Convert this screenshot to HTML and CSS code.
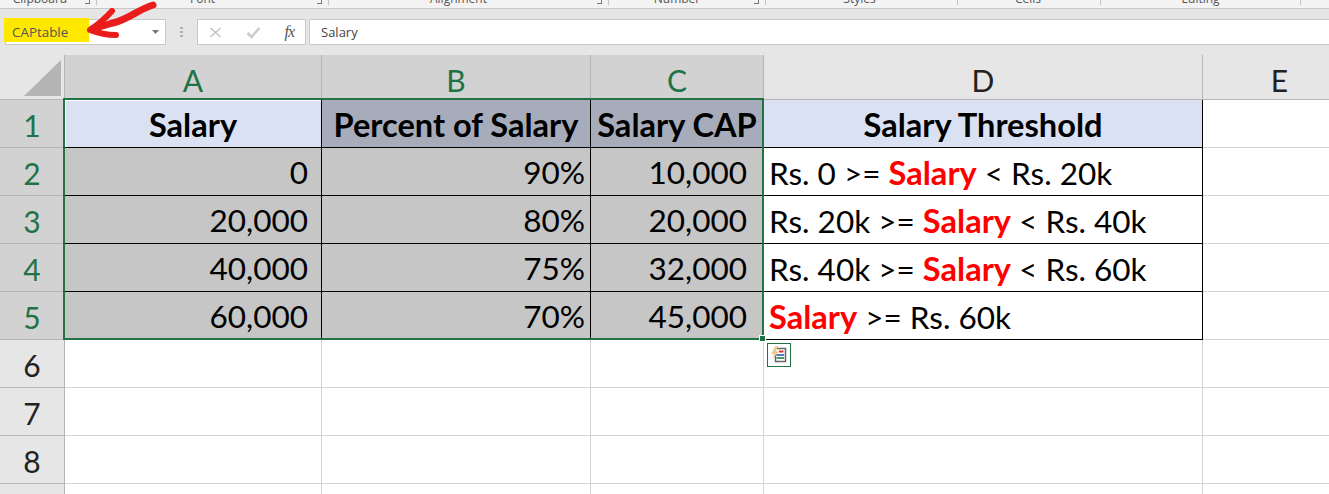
FILE: index.html
```html
<!DOCTYPE html>
<html lang="en">
<head>
<meta charset="utf-8">
<title>CAPtable</title>
<link rel="stylesheet" href="styles.css">
</head>
<body>
<div class="app">
  <div class="ribbon">
    <div class="group g1"><span>Clipboard</span><i class="launch"></i></div>
    <div class="group g2"><span>Font</span><i class="launch"></i></div>
    <div class="group g3"><span>Alignment</span><i class="launch"></i></div>
    <div class="group g4"><span>Number</span><i class="launch"></i></div>
    <div class="group g5"><span>Styles</span></div>
    <div class="group g6"><span>Cells</span></div>
    <div class="group g7"><span>Editing</span></div>
  </div>
  <div class="formula-row">
    <div class="namebox">
      <span class="name-mark">CAPtable</span>
      <svg class="caret" width="7" height="4" viewBox="0 0 7 4"><path d="M0 0h7L3.500 4z" fill="#777"/></svg>
    </div>
    <svg class="dots" width="3" height="11" viewBox="0 0 3 11"><path d="M0 0h3v2H0zM0 4h3v2H0zM0 8h3v2H0z" fill="#b0b0b0"/></svg>
    <div class="fx-box">
      <svg width="13" height="13" viewBox="0 0 13 13"><path d="M1.500 2l10 9M11.500 2l-10 9" stroke="#c4c4c4" stroke-width="1.500" fill="none"/></svg>
      <svg width="15" height="13" viewBox="0 0 15 13"><path d="M1.500 7l4 4 8-9" stroke="#cbcbcb" stroke-width="2.500" fill="none"/></svg>
      <span class="fx">fx</span>
    </div>
    <div class="formula">Salary</div>
  </div>
  <div class="sheet">
    <div class="corner"><svg width="37" height="37" viewBox="0 0 37 37"><path d="M0 36L37 0v36z" fill="#b4b4b4"/></svg></div>
    <div class="ch sel">A</div><div class="ch sel">B</div><div class="ch sel">C</div><div class="ch">D</div><div class="ch">E</div>

    <div class="rh sel">1</div>
    <div class="c b active hd">Salary</div><div class="c b dark hd">Percent of Salary</div><div class="c b dark hd">Salary CAP</div><div class="c b light hd">Salary Threshold</div><div class="c"></div>

    <div class="rh sel">2</div>
    <div class="c b grey num">0</div><div class="c b grey num pb">90%</div><div class="c b grey num pc">10,000</div><div class="c b txt">Rs. 0 &gt;= <b>Salary</b> &lt; Rs. 20k</div><div class="c"></div>

    <div class="rh sel">3</div>
    <div class="c b grey num">20,000</div><div class="c b grey num pb">80%</div><div class="c b grey num pc">20,000</div><div class="c b txt">Rs. 20k &gt;= <b>Salary</b> &lt; Rs. 40k</div><div class="c"></div>

    <div class="rh sel">4</div>
    <div class="c b grey num">40,000</div><div class="c b grey num pb">75%</div><div class="c b grey num pc">32,000</div><div class="c b txt">Rs. 40k &gt;= <b>Salary</b> &lt; Rs. 60k</div><div class="c"></div>

    <div class="rh sel">5</div>
    <div class="c b grey num">60,000</div><div class="c b grey num pb">70%</div><div class="c b grey num pc">45,000</div><div class="c b txt"><b>Salary</b> &gt;= Rs. 60k</div><div class="c"></div>

    <div class="rh">6</div>
    <div class="c"></div><div class="c"></div><div class="c"></div>
    <div class="c qa-cell"><div class="qa"><svg width="18" height="18" viewBox="0 0 18 18"><path d="M6.500 2.500h9v13h-10V8" fill="#fff" stroke="#666" stroke-width="1.500"/><path d="M5.500 0L1 8h3L2.500 13 9 5.500H6L8 0z" fill="#efc88a"/><path d="M9 4.500h4.500v2H9z" fill="#d33"/><path d="M6.500 8h7.500v2H6.500z" fill="#4a7fc1"/><path d="M6.500 11h7.500v2H6.500z" fill="#4f9a6a"/></svg></div></div>
    <div class="c"></div>

    <div class="rh">7</div>
    <div class="c"></div><div class="c"></div><div class="c"></div><div class="c"></div><div class="c"></div>
    <div class="rh">8</div>
    <div class="c"></div><div class="c"></div><div class="c"></div><div class="c"></div><div class="c"></div>
    <div class="rh"></div>
    <div class="c"></div><div class="c"></div><div class="c"></div><div class="c"></div><div class="c"></div>

    <div class="selection"><i class="handle"></i></div>
  </div>
  <svg class="arrow" width="90" height="44" viewBox="0 0 90 44">
    <path d="M66 5C52 9 42 19 26 23L5 29" fill="none" stroke="#ea1c1c" stroke-width="7" stroke-linecap="round"/>
    <path d="M25 11Q16 21 3 30Q16 35 29 35" fill="none" stroke="#ea1c1c" stroke-width="6" stroke-linecap="round" stroke-linejoin="round"/>
  </svg>
</div>
</body>
</html>
```
FILE: styles.css
```css
* { box-sizing: border-box; }
html, body { margin: 0; padding: 0; }
body { width: 1329px; height: 494px; overflow: hidden; background: #fff; font-family: "Lato", "Liberation Sans", sans-serif; }
.app { position: relative; width: 1329px; height: 494px; overflow: hidden; display: flex; flex-direction: column; }

.ribbon { height: 9px; flex: none; display: grid; grid-template-columns: 97px 232px 280px 157px 192px 143px 200px 28px; background: #f3f3f3; border-bottom: 1px solid #c8c8c8; overflow: hidden; font: 12px/14px "Open Sans", sans-serif; color: #555; }
.group { position: relative; height: 5px; border-right: 1px solid #c4c4c4; text-align: center; }
.group span { display: block; margin-top: -8px; }
.launch { position: absolute; right: 6px; top: 0; width: 5px; height: 4px; border-right: 1px solid #777; border-bottom: 1px solid #777; }
.g1 span { padding-right: 16px; }
.g2 span, .g3 span, .g4 span { padding-right: 20px; }
.g5 span { padding-right: 4px; }
.g6 span { padding-right: 2px; }

.formula-row { height: 46px; flex: none; background: #e6e6e6; display: flex; align-items: flex-start; padding: 10px 0 0 5px; }
.namebox { width: 161px; height: 26px; background: #fff; border: 1px solid #c8c8c8; position: relative; display: flex; align-items: center; }
.name-mark { position: absolute; left: -2px; top: -2px; width: 85px; height: 24px; background: #ffe800; color: #555; font: 13.4px/28px "Open Sans", sans-serif; padding-left: 8px; }
.caret { position: absolute; right: 6px; top: 10px; }
.dots { margin: 8px 14px 0 14px; flex: none; }
.fx-box { width: 109px; height: 26px; background: #fff; border: 1px solid #c8c8c8; display: flex; align-items: center; justify-content: space-between; padding: 0 11px; flex: none; }
.fx { font: italic 16px/1 "Liberation Serif", serif; color: #555; letter-spacing: -1px; }
.formula { flex: 1; height: 26px; margin-left: 3px; background: #fff; border: 1px solid #c8c8c8; border-right: 0; padding-left: 11px; font: 13px/25px "Open Sans", sans-serif; color: #444; }

.sheet { flex: 1; position: relative; display: grid; grid-template-columns: 65px 257px 269px 173px 439px 154px; grid-template-rows: 45px repeat(9, 48px); font-family: "Lato", sans-serif; color: #000; }
.corner { background: #e6e6e6; border-right: 1px solid #b5b5b5; border-bottom: 1px solid #b5b5b5; padding: 5px 0 0 24px; line-height: 0; }
.ch, .rh { background: #e6e6e6; border-right: 1px solid #b5b5b5; border-bottom: 1px solid #b5b5b5; text-align: center; font-size: 30px; line-height: 50px; color: #222; }
.ch.sel, .rh.sel { background: #d2d2d2; color: #217346; }

.c { border-right: 1px solid #d4d4d4; border-bottom: 1px solid #d4d4d4; font-size: 31.5px; line-height: 49px; white-space: nowrap; }
.c.b { border-right-color: #000; border-bottom-color: #000; }
.hd { font-weight: 700; text-align: center; font-size: 32.6px; }
.active, .light { background: #d9e1f2; }
.active { box-shadow: inset 1px 1px 0 #fff; }
.dark { background: #a6acb9; }
.grey { background: #c6c6c6; }
.num { text-align: right; padding-right: 13px; }
.num.pb { padding-right: 5px; }
.num.pc { padding-right: 16px; }
.txt { padding-left: 5px; }
.txt b { color: #f00; font-weight: 700; font-size: 32.6px; }

.qa-cell { position: relative; }
.qa { position: absolute; left: 3px; top: 3px; width: 24px; height: 24px; background: #fff; border: 1px solid #217346; display: flex; align-items: center; justify-content: center; }

.selection { position: absolute; grid-column: 2 / 5; grid-row: 2 / 7; left: -2px; right: 0; top: -2px; bottom: 0; border: 2px solid #217346; pointer-events: none; }
.handle { position: absolute; right: -4px; bottom: -4px; width: 7px; height: 7px; background: #217346; border: 1px solid #fff; }

.arrow { position: absolute; left: 87px; top: 0; }
```
